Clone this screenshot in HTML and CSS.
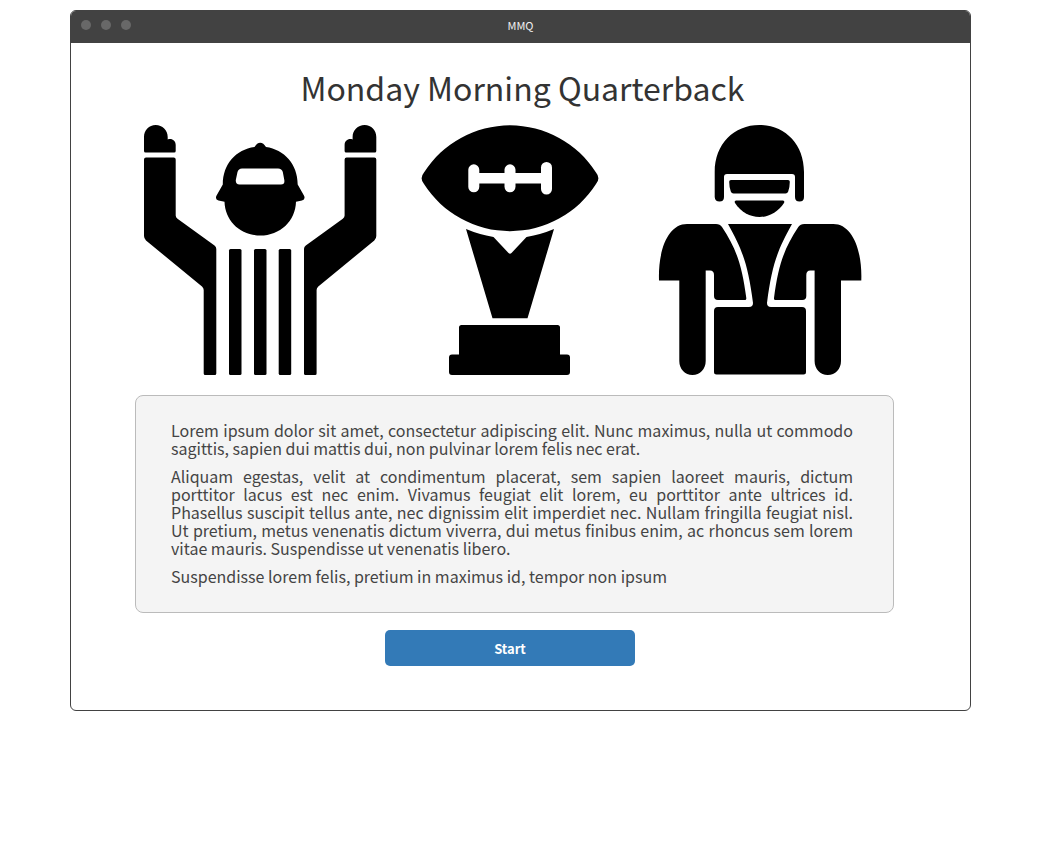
FILE: index.html
```html
<!DOCTYPE html>
<html lang="en">
<head>
<meta charset="utf-8">
<meta name="viewport" content="width=device-width, initial-scale=1">
<title>MMQ</title>
<link rel="stylesheet" href="styles.css">
</head>
<body>
<div class="window">
  <header class="titlebar">
    <div class="dots" aria-hidden="true"><span class="dot"></span><span class="dot"></span><span class="dot"></span></div>
    <span class="titlebar-text">MMQ</span>
  </header>
  <main class="content">
    <h1 class="title">Monday Morning Quarterback</h1>
    <div class="pictures">
      <svg class="picture" viewBox="135 125 250 250" role="img" aria-label="Referee">
        <defs>
          <g id="ref-arm">
            <path d="M144 151V137C144 130 149 125 155.700 125S167.700 130 167.700 137V139.500C172 138 175.700 141 175.700 145V151Q175.700 152.500 174.200 152.500H145.500Q144 152.500 144 151Z"/>
            <path d="M146 157.400H173.700Q175.700 157.400 175.700 159.400V215.500Q175.700 217.500 177.500 218.700L214.500 245.500Q216.300 246.900 216.300 249V373.500Q216.300 375 214.800 375H205.200Q203.700 375 203.700 373.500V290Q203.700 288 202 286.500L146 240.500Q144 238.500 144 236V159.400Q144 157.400 146 157.400Z"/>
          </g>
        </defs>
        <use href="#ref-arm"/>
        <use href="#ref-arm" transform="translate(520.300 0) scale(-1 1)"/>
        <rect x="229" y="249" width="12.500" height="126" rx="1.500"/>
        <rect x="254" y="249" width="12.500" height="126" rx="1.500"/>
        <rect x="278.700" y="249" width="12.500" height="126" rx="1.500"/>
        <path fill-rule="evenodd" d="M254.500 147Q257 142.700 260.200 142.700T266 147C284 149.500 297.700 164 297.700 184.500L304.200 196Q305.500 199.500 302 200.500L296 201.700C295.500 221 280 235.500 260.300 235.500S225 221 224.500 201.700L218.500 200.500Q215 199.500 216.300 196L222.800 184.500C222.800 164 236 149.500 254.500 147ZM242 168.500Q238.500 168.500 237.500 172L235.800 180Q235.500 184.500 239.500 184.500H281Q285 184.500 284.300 180L282.800 172Q281.800 168.500 278 168.500Z"/>
      </svg>
      <svg class="picture" viewBox="385 125 250 250" role="img" aria-label="Football trophy">
        <path d="M424 172.500A102 102 0 0 1 596 172.500Q600.800 178.200 596 184A102 102 0 0 1 424 184Q419.200 178.200 424 172.500Z"/>
        <g class="laces">
          <rect x="472" y="173" width="75" height="10.500"/>
          <rect x="468.300" y="164.300" width="11" height="28" rx="5.500"/>
          <rect x="504.500" y="164.300" width="11" height="28" rx="5.500"/>
          <rect x="541" y="162" width="11" height="32.500" rx="5.500"/>
        </g>
        <path d="M466 229Q479 234.500 493.500 237L508.500 253Q510 254.500 511.500 253L526.500 237Q541 234.500 554 229L527.500 318.300H492.500Z"/>
        <path d="M461.500 325H557.500Q560 325 560 327.500V354.500H567Q570 354.500 570 357.500V372Q570 375 567 375H452Q449 375 449 372V357.500Q449 354.500 452 354.500H459V327.500Q459 325 461.500 325Z"/>
      </svg>
      <svg class="picture" viewBox="635 125 250 250" role="img" aria-label="Football player">
        <defs>
          <path id="player-arm" d="M659 280.500C658 250 668 224 687 224H716Q720 224 722 227C736 248 742 265 746.300 298Q746.500 300 745 300H718Q714 300 714 296V275Q714 270.500 710 270.500H705.700V361C705.700 369 700 375 692.500 375S679.300 369 679.300 361V280.500Z"/>
        </defs>
        <path d="M714.700 172C714.700 144 734 125 759.400 125S804 144 804 172V197Q804 201.500 799.500 201.500T795 197V177Q795 174 792 174H727Q724 174 724 177V197Q724 201.500 719.500 201.500T714.700 197Z"/>
        <path d="M731 180H788Q790 180 789.800 182Q789.700 188 788.200 191.500Q787.500 193.500 785.500 193.500H733.500Q731.500 193.500 730.800 191.500Q729.300 188 729.200 182Q729 180 731 180Z"/>
        <path d="M736 200.500H783Q785 201 784 203C778 212 769 217 759.500 217S741 212 735 203Q734 201 736 200.500Z"/>
        <use href="#player-arm"/>
        <use href="#player-arm" transform="translate(1520.300 0) scale(-1 1)"/>
        <path d="M728 224H792C777 251 772 265 767 303Q767 307 771 307H802Q806 307 806 311V372Q806 374.500 803.500 374.500H716.500Q714 374.500 714 372V311Q714 307 718 307H749Q753 307 753 303C748 265 743 251 728 224Z"/>
      </svg>
    </div>
    <section class="message">
      <p>Lorem ipsum dolor sit amet, consectetur adipiscing elit. Nunc maximus, nulla ut commodo sagittis, sapien dui mattis dui, non pulvinar lorem felis nec erat.</p>
      <p>Aliquam egestas, velit at condimentum placerat, sem sapien laoreet mauris, dictum porttitor lacus est nec enim. Vivamus feugiat elit lorem, eu porttitor ante ultrices id. Phasellus suscipit tellus ante, nec dignissim elit imperdiet nec. Nullam fringilla feugiat nisl. Ut pretium, metus venenatis dictum viverra, dui metus finibus enim, ac rhoncus sem lorem vitae mauris. Suspendisse ut venenatis libero.</p>
      <p>Suspendisse lorem felis, pretium in maximus id, tempor non ipsum</p>
    </section>
    <div class="actions"><button class="start" type="button">Start</button></div>
  </main>
</div>
</body>
</html>
```
FILE: styles.css
```css
* { box-sizing: border-box; }

body {
  margin: 10px 89px 10px 70px;
  background: #fff;
  font-family: "Noto Sans CJK SC", sans-serif;
  color: #444;
}

.window {
  border: 1px solid #424242;
  border-radius: 6px;
  overflow: hidden;
}

.titlebar {
  display: grid;
  grid-template-columns: 1fr auto 1fr;
  align-items: center;
  height: 32px;
  padding: 0 10px 4px;
  background: #424242;
}

.dots { display: flex; gap: 10px; }

.dot {
  width: 10px;
  height: 10px;
  border-radius: 50%;
  background: #686868;
}

.titlebar-text { font-size: 11px; line-height: 16px; color: #f0f0f0; }

.content { padding: 20px 76px 44px 64px; }

.title {
  margin: 0;
  padding-left: 16px;
  font-size: 32px;
  font-weight: 400;
  line-height: 48px;
  text-align: center;
  color: #333;
}

.pictures { display: flex; margin: 14px 0 20px; }

.picture { display: block; flex: 0 1 250px; min-width: 0; aspect-ratio: 1; }

.laces { fill: #fff; }

.message {
  padding: 25px 40px 27px 35px;
  border: 1px solid #bbb;
  border-radius: 8px;
  background: #f4f4f4;
  font-size: 16px;
  line-height: 18px;
  text-align: justify;
}

.message p { margin: 0 0 10px; }
.message p:last-child { margin-bottom: 0; }

.actions { display: flex; justify-content: center; padding-right: 9px; margin-top: 17px; }

.start {
  width: 250px;
  height: 36px;
  border: 0;
  border-radius: 5px;
  background: #337ab7;
  color: #fff;
  font-family: inherit;
  font-size: 13px;
  font-weight: 700;
}
```
